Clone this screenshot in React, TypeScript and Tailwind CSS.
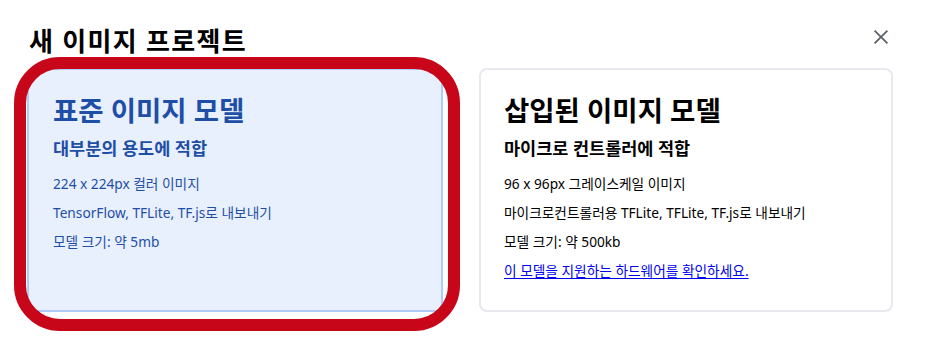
import React from 'react';

const font = { fontFamily: '"Noto Sans", "Noto Sans CJK KR", sans-serif' };

interface ModelCardProps {
  title: string;
  subtitle: string;
  lines: string[];
  link?: string;
  selected?: boolean;
}

const ModelCard: React.FC<ModelCardProps> = ({ title, subtitle, lines, link, selected }) => {
  return (
    <div
      className={
        selected
          ? 'w-[416px] h-[244px] rounded-[8px] border-2 border-[#aecbfa] bg-[#e8f0fe] px-[24px] pt-[23px] text-[#1f4ea6]'
          : 'w-[414px] h-[244px] rounded-[8px] border-2 border-[#e8e8ee] bg-white px-[23px] pt-[23px] text-black'
      }
    >
      <div className="text-[27.5px] leading-[36px] font-semibold">{title}</div>
      <div className="mt-[7px] text-[17.5px] leading-[24px] font-bold">{subtitle}</div>
      <div className="mt-[14px] flex flex-col gap-[9px] text-[13.7px] leading-[20px]">
        {lines.map((line) => (
          <div key={line}>{line}</div>
        ))}
        {link && (
          <a href="#" className="text-[#0000ee] underline underline-offset-2">
            {link}
          </a>
        )}
      </div>
    </div>
  );
};

export default function App() {
  return (
    <div className="relative w-[928px] h-[354px] bg-white overflow-hidden" style={font}>
      <div className="flex items-start justify-between pl-[29px] pr-[36px] pt-[25px]">
        <h1 className="text-[26px] leading-[32px] font-bold tracking-[1.3px] text-black">새 이미지 프로젝트</h1>
        <button className="mt-[1px] text-[#5f6368]" aria-label="close">
          <svg width="22" height="22" viewBox="0 0 24 24" fill="none" stroke="currentColor" strokeWidth="2">
            <path d="M5 5l14 14M19 5L5 19" />
          </svg>
        </button>
      </div>

      <div className="flex gap-[36px] pl-[27px] pt-[11px]">
        <ModelCard
          selected
          title="표준 이미지 모델"
          subtitle="대부분의 용도에 적합"
          lines={['224 x 224px 컬러 이미지', 'TensorFlow, TFLite, TF.js로 내보내기', '모델 크기: 약 5mb']}
        />
        <ModelCard
          title="삽입된 이미지 모델"
          subtitle="마이크로 컨트롤러에 적합"
          lines={['96 x 96px 그레이스케일 이미지', '마이크로컨트롤러용 TFLite, TFLite, TF.js로 내보내기', '모델 크기: 약 500kb']}
          link="이 모델을 지원하는 하드웨어를 확인하세요."
        />
      </div>

      {/* red highlight ring over the selected card */}
      <div className="pointer-events-none absolute left-[14px] top-[57px] w-[446px] h-[274px] rounded-[46px] border-[12px] border-[#c8061a]" />
    </div>
  );
}
